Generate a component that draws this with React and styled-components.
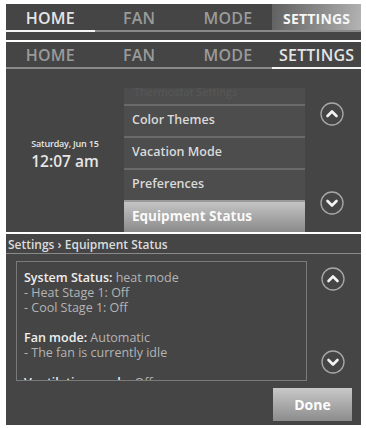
import styled, { createGlobalStyle } from "styled-components"

const GlobalStyle = createGlobalStyle`
* {
  margin: 0;
  padding: 0;
  box-sizing: border-box;
}
body {
  background: #fff;
  font-family: "Open Sans", "DejaVu Sans", sans-serif;
}
`

const Page = styled.div`
  width: 366px;
  height: 428px;
  padding: 4px 5px 0 6px;
  display: flex;
  flex-direction: column;
  gap: 2px;
`

const Panel = styled.div`
  background: #454545;
  height: ${props => props.h}px;
  display: flex;
  flex-direction: column;
  overflow: hidden;
`

const TabRow = styled.div`
  display: grid;
  grid-template-columns: repeat(4, 1fr);
  height: ${props => props.h}px;
`

const Tab = styled.div`
  display: flex;
  align-items: center;
  justify-content: center;
  padding-top: ${props => props.$drop || 0}px;
  font-size: ${props => (props.$highlight ? "14px" : "16px")};
  font-weight: ${props => (props.$highlight ? 700 : 600)};
  letter-spacing: 0.2px;
  color: ${props => (props.$highlight ? "#f6f6f6" : props.$active ? "#e4e4e4" : "#9a9a9a")};
  border-bottom: 2px solid ${props => (props.$active ? "#f4f4f4" : "#8a8a8a")};
  background: ${props =>
    props.$highlight
      ? "linear-gradient(100deg, #606060 0%, #8c8c8c 55%, #b4b4b4 100%)"
      : "transparent"};
`

const Body = styled.div`
  flex: 1;
  display: flex;
`

const DateCol = styled.div`
  width: 118px;
  display: flex;
  flex-direction: column;
  align-items: center;
  padding-top: 68px;
  color: #e6e6e6;
`

const DateLine = styled.div`
  font-size: 9px;
  font-weight: 600;
  letter-spacing: -0.2px;
`

const TimeLine = styled.div`
  font-size: 15.5px;
  font-weight: 600;
  margin-top: 0;
`

const Menu = styled.div`
  width: 181px;
  margin-top: 19px;
  display: flex;
  flex-direction: column;
  background: #4d4d4d;
`

const GhostItem = styled.div`
  height: 16px;
  overflow: hidden;
  padding: 0 10px;
  font-size: 11px;
  color: #585858;
  line-height: 8px;
`

const MenuItem = styled.div`
  height: 32px;
  display: flex;
  align-items: center;
  padding: 0 0 3px 8px;
  border-top: 2px solid #6a6a6a;
  font-size: ${props => (props.$selected ? "13.5px" : "12.5px")};
  font-weight: ${props => (props.$selected ? 700 : 600)};
  color: ${props => (props.$selected ? "#fafafa" : "#dadada")};
  background: ${props =>
    props.$selected ? "linear-gradient(#c4c4c4, #8a8a8a)" : "transparent"};
  ${props => props.$selected && "border-top-color: #9a9a9a;"}
`

const ArrowCol = styled.div`
  flex: 1;
  display: flex;
  flex-direction: column;
  align-items: center;
  justify-content: space-between;
  padding: ${props => props.pad};
  padding-right: 3px;
`

const Header = styled.div`
  height: 20px;
  display: flex;
  align-items: center;
  padding: 1px 0 0 2px;
  font-size: 12px;
  font-weight: 600;
  color: #dcdcdc;
  border-bottom: 1.5px solid #8a8a8a;
`

const StatusBody = styled.div`
  display: flex;
  padding: 7px 0 0 10px;
`

const StatusBox = styled.div`
  width: 291px;
  height: 120px;
  border: 1.5px solid #7a7a7a;
  padding: 8px 0 0 7px;
  overflow: hidden;
  font-size: 12.5px;
  line-height: 15px;
  color: #b4b4b4;
`

const Line = styled.div`
  height: 15px;
  white-space: nowrap;
`

const Label = styled.span`
  color: #eeeeee;
  font-weight: 600;
`

const Footer = styled.div`
  display: flex;
  justify-content: flex-end;
  padding: 7px 9px 0 0;
`

const DoneButton = styled.div`
  width: 79px;
  height: 33px;
  display: flex;
  align-items: center;
  justify-content: center;
  background: linear-gradient(#c8c8c8, #8c8c8c);
  color: #fff;
  font-size: 14px;
  font-weight: 700;
`

const CircleArrow = ({ down }) => (
  <svg width="24" height="24" viewBox="0 0 24 24">
    <circle cx="12" cy="12" r="11" fill="none" stroke="#a8a8a8" strokeWidth="1.3" />
    <polyline
      points={down ? "7.5,10 12,14.5 16.5,10" : "7.5,14 12,9.5 16.5,14"}
      fill="none"
      stroke="#f4f4f4"
      strokeWidth="2.6"
      strokeLinecap="round"
      strokeLinejoin="round"
    />
  </svg>
)

const tabs = ["HOME", "FAN", "MODE", "SETTINGS"]

const App = () => {
  return (
    <>
      <GlobalStyle />
      <Page>
        <Panel h={36}>
          <TabRow h={28}>
            {tabs.map((t, i) => (
              <Tab key={t} $drop={2} $active={i === 0} $highlight={i === 3}>{t}</Tab>
            ))}
          </TabRow>
        </Panel>

        <Panel h={190}>
          <TabRow h={27}>
            {tabs.map((t, i) => (
              <Tab key={t} $active={i === 3}>{t}</Tab>
            ))}
          </TabRow>
          <Body>
            <DateCol>
              <DateLine>Saturday, Jun 15</DateLine>
              <TimeLine>12:07 am</TimeLine>
            </DateCol>
            <Menu>
              <GhostItem>Thermostat Settings</GhostItem>
              <MenuItem>Color Themes</MenuItem>
              <MenuItem>Vacation Mode</MenuItem>
              <MenuItem>Preferences</MenuItem>
              <MenuItem $selected>Equipment Status</MenuItem>
            </Menu>
            <ArrowCol pad="33px 0 17px">
              <CircleArrow />
              <CircleArrow down />
            </ArrowCol>
          </Body>
        </Panel>

        <Panel h={191}>
          <Header>Settings › Equipment Status</Header>
          <StatusBody>
            <StatusBox>
              <Line><Label>System Status:</Label> heat mode</Line>
              <Line>- Heat Stage 1: Off</Line>
              <Line>- Cool Stage 1: Off</Line>
              <Line />
              <Line><Label>Fan mode:</Label> Automatic</Line>
              <Line>- The fan is currently idle</Line>
              <Line />
              <Line><Label>Ventilation mode:</Label> Off</Line>
            </StatusBox>
            <ArrowCol pad="6px 0 7px">
              <CircleArrow />
              <CircleArrow down />
            </ArrowCol>
          </StatusBody>
          <Footer>
            <DoneButton>Done</DoneButton>
          </Footer>
        </Panel>
      </Page>
    </>
  )
}

export default App
